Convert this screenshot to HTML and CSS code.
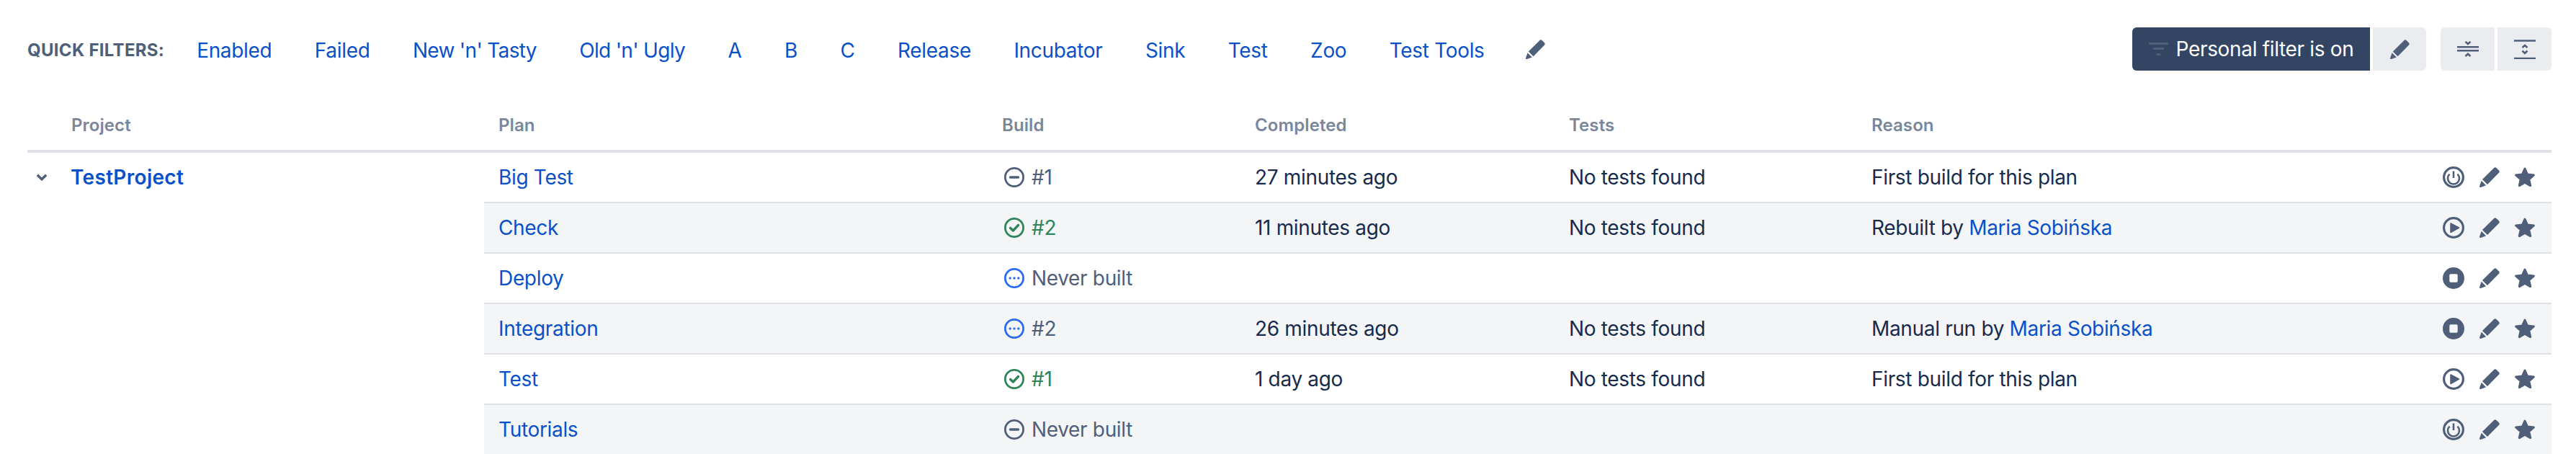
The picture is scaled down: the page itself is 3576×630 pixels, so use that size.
FILE: index.html
```html
<!DOCTYPE html>
<html lang="en">
<head>
<meta charset="utf-8">
<title>Plans</title>
<link rel="stylesheet" href="styles.css">
</head>
<body>
<svg class="sprites" xmlns="http://www.w3.org/2000/svg">
  <symbol id="pencil" viewBox="0 0 27 27">
    <path d="M19.2 1.2a2.6 2.6 0 0 1 3.6 0l3 3a2.6 2.6 0 0 1 0 3.6L10.600 23.200 3.800 16.400z"/>
    <path d="M2.600 18.200 8.800 24.400 1.600 26.900C.5 27.200-.2 26.500.1 25.400z"/>
  </symbol>
  <symbol id="star" viewBox="0 0 28 28">
    <path stroke="currentColor" stroke-width="3" stroke-linejoin="round" d="M14 2 17.600 10 26.400 10.900 19.800 16.800 21.700 25.600 14 21.100 6.300 25.600 8.200 16.800 1.600 10.900 10.400 10z"/>
  </symbol>
  <symbol id="power" viewBox="0 0 30 30">
    <circle cx="15" cy="15" r="13.400" fill="none" stroke="currentColor" stroke-width="3.200"/>
    <path fill="none" stroke="currentColor" stroke-width="2.600" d="M9.600 10.600a8 8 0 1 0 10.800 0M15 6.500v9.500"/>
  </symbol>
  <symbol id="play" viewBox="0 0 30 30">
    <circle cx="15" cy="15" r="13.400" fill="none" stroke="currentColor" stroke-width="3.200"/>
    <path stroke="currentColor" stroke-width="1.500" stroke-linejoin="round" d="M11 9 22.500 15 11 21.500z"/>
  </symbol>
  <symbol id="stop" viewBox="0 0 30 30">
    <path fill-rule="evenodd" d="M15 0a15 15 0 1 1 0 30 15 15 0 0 1 0-30zM11 9.300a1.700 1.700 0 0 0-1.700 1.700v8a1.700 1.700 0 0 0 1.700 1.700h8a1.700 1.700 0 0 0 1.700-1.700v-8a1.700 1.700 0 0 0-1.700-1.700z"/>
  </symbol>
  <symbol id="st-minus" viewBox="0 0 28 28">
    <circle cx="14" cy="14" r="12.600" fill="none" stroke="currentColor" stroke-width="2.800"/>
    <path stroke="currentColor" stroke-width="3.600" stroke-linecap="round" d="M8.600 14h10.800"/>
  </symbol>
  <symbol id="st-check" viewBox="0 0 28 28">
    <circle cx="14" cy="14" r="12.600" fill="none" stroke="currentColor" stroke-width="2.800"/>
    <path fill="none" stroke="currentColor" stroke-width="3.400" stroke-linecap="round" stroke-linejoin="round" d="M8.600 14.400 12.400 18 19.600 10.400"/>
  </symbol>
  <symbol id="st-dots" viewBox="0 0 28 28">
    <circle cx="14" cy="14" r="12.600" fill="none" stroke="currentColor" stroke-width="2.800"/>
    <circle cx="8.200" cy="14" r="1.700"/><circle cx="14" cy="14" r="1.700"/><circle cx="19.800" cy="14" r="1.700"/>
  </symbol>
</svg>

<header class="toolbar">
  <nav class="filters">
    <span class="filters-label">QUICK FILTERS:</span>
    <a class="link" href="#">Enabled</a>
    <a class="link" href="#">Failed</a>
    <a class="link tight" href="#">New 'n' Tasty</a>
    <a class="link tight" href="#">Old 'n' Ugly</a>
    <a class="link" href="#">A</a>
    <a class="link" href="#">B</a>
    <a class="link" href="#">C</a>
    <a class="link" href="#">Release</a>
    <a class="link" href="#">Incubator</a>
    <a class="link" href="#">Sink</a>
    <a class="link" href="#">Test</a>
    <a class="link" href="#">Zoo</a>
    <a class="link" href="#">Test Tools</a>
    <svg class="ico ico-pencil filters-edit"><use href="#pencil"/></svg>
  </nav>
  <div class="tools">
    <div class="btn-group">
      <button class="btn btn-dark">
        <svg class="funnel" viewBox="0 0 27 18"><path d="M0 0h27v3H0zM6 7h15v3H6zM10.500 15h6v3h-6z"/></svg>
        <span>Personal filter is on</span>
      </button>
      <button class="btn btn-light btn-edit"><svg class="ico ico-pencil"><use href="#pencil"/></svg></button>
    </div>
    <div class="btn-group">
      <button class="btn btn-light btn-fold btn-first">
        <svg class="fold" viewBox="0 0 30 22"><path d="M0 8.200h30M0 13.200h30" stroke-width="2.400"/><path d="M11.500.8 15 4l3.500-3.200M11.500 21 15 17.800l3.500 3.200" stroke-width="2.600"/></svg>
      </button>
      <button class="btn btn-light btn-fold btn-last">
        <svg class="fold unfold" viewBox="0 0 30 27"><path d="M0 1.500h30M0 26h30" stroke-width="2.400"/><path d="M11.500 11 15 8l3.500 3M11.500 15.500 15 19l3.500-3.500" stroke-width="2.600"/></svg>
      </button>
    </div>
  </div>
</header>

<table class="plans">
  <colgroup>
    <col class="c-project"><col class="c-plan"><col class="c-build"><col class="c-completed"><col class="c-tests"><col class="c-reason"><col class="c-actions">
  </colgroup>
  <thead>
    <tr>
      <th class="th-project">Project</th><th>Plan</th><th>Build</th><th>Completed</th><th>Tests</th><th>Reason</th><th></th>
    </tr>
  </thead>
  <tbody>
    <tr>
      <td class="project" rowspan="6">
        <div class="project-inner">
          <svg class="chevron" viewBox="0 0 16 10"><path d="M1.800 1.800 8 7.800l6.200-6"/></svg>
          <a class="link strong" href="#">TestProject</a>
        </div>
      </td>
      <td><a class="link" href="#">Big Test</a></td>
      <td><span class="build grey"><svg class="st"><use href="#st-minus"/></svg>#1</span></td>
      <td>27 minutes ago</td>
      <td>No tests found</td>
      <td>First build for this plan</td>
      <td><div class="actions"><svg class="act"><use href="#power"/></svg><svg class="ico ico-pencil"><use href="#pencil"/></svg><svg class="ico"><use href="#star"/></svg></div></td>
    </tr>
    <tr class="alt">
      <td><a class="link" href="#">Check</a></td>
      <td><span class="build green"><svg class="st"><use href="#st-check"/></svg>#2</span></td>
      <td>11 minutes ago</td>
      <td>No tests found</td>
      <td>Rebuilt by <a class="link" href="#">Maria Sobińska</a></td>
      <td><div class="actions"><svg class="act"><use href="#play"/></svg><svg class="ico ico-pencil"><use href="#pencil"/></svg><svg class="ico"><use href="#star"/></svg></div></td>
    </tr>
    <tr>
      <td><a class="link" href="#">Deploy</a></td>
      <td><span class="build grey"><svg class="st blue"><use href="#st-dots"/></svg>Never built</span></td>
      <td></td>
      <td></td>
      <td></td>
      <td><div class="actions"><svg class="act"><use href="#stop"/></svg><svg class="ico ico-pencil"><use href="#pencil"/></svg><svg class="ico"><use href="#star"/></svg></div></td>
    </tr>
    <tr class="alt">
      <td><a class="link" href="#">Integration</a></td>
      <td><span class="build grey"><svg class="st blue"><use href="#st-dots"/></svg>#2</span></td>
      <td>26 minutes ago</td>
      <td>No tests found</td>
      <td>Manual run by <a class="link" href="#">Maria Sobińska</a></td>
      <td><div class="actions"><svg class="act"><use href="#stop"/></svg><svg class="ico ico-pencil"><use href="#pencil"/></svg><svg class="ico"><use href="#star"/></svg></div></td>
    </tr>
    <tr>
      <td><a class="link" href="#">Test</a></td>
      <td><span class="build green"><svg class="st"><use href="#st-check"/></svg>#1</span></td>
      <td>1 day ago</td>
      <td>No tests found</td>
      <td>First build for this plan</td>
      <td><div class="actions"><svg class="act"><use href="#play"/></svg><svg class="ico ico-pencil"><use href="#pencil"/></svg><svg class="ico"><use href="#star"/></svg></div></td>
    </tr>
    <tr class="alt last">
      <td><a class="link" href="#">Tutorials</a></td>
      <td><span class="build grey"><svg class="st"><use href="#st-minus"/></svg>Never built</span></td>
      <td></td>
      <td></td>
      <td></td>
      <td><div class="actions"><svg class="act"><use href="#power"/></svg><svg class="ico ico-pencil"><use href="#pencil"/></svg><svg class="ico"><use href="#star"/></svg></div></td>
    </tr>
  </tbody>
</table>
</body>
</html>
```

FILE: styles.css
```css
* { box-sizing: border-box; }
html, body { margin: 0; padding: 0; background: #fff; }
html { overflow: hidden; }
body {
  width: 3576px;
  height: 630px;
  padding: 0 34px 0 38px;
  font-family: Inter, "Noto Sans", sans-serif;
  font-size: 28px;
  line-height: 40px;
  letter-spacing: -0.33px;
  color: #172b4d;
  overflow: hidden;
}
.sprites { display: none; }
.link { color: #0a50c8; text-decoration: none; }
.strong { font-weight: 600; letter-spacing: 0.3px; }
.tight { letter-spacing: -0.7px; }

.toolbar {
  display: flex;
  justify-content: space-between;
  align-items: center;
  height: 136px;
}
.filters { display: flex; align-items: center; gap: 59.5px; padding-top: 4px; }
.filters-label {
  font-size: 24px;
  font-weight: 700;
  letter-spacing: 0.3px;
  color: #505f79;
  margin-right: -14.5px;
}
.ico { width: 28px; height: 28px; color: #505f79; fill: #505f79; display: block; }
.ico-pencil { width: 27px; height: 27px; }
.filters-edit { margin-left: -2.5px; margin-top: -4px; }

.tools { display: flex; gap: 20px; }
.btn-group { display: flex; gap: 4px; }
.btn {
  display: flex;
  align-items: center;
  justify-content: center;
  height: 60px;
  border: 0;
  padding: 0;
  font: inherit;
  letter-spacing: inherit;
}
.btn-dark {
  width: 330px;
  background: #344563;
  color: #fff;
  border-radius: 6px 0 0 6px;
  gap: 11px;
}
.btn-light { background: #ebecf0; }
.btn-edit { width: 74px; border-radius: 0 6px 6px 0; }
.btn-fold { width: 75px; }
.btn-first { border-radius: 6px 0 0 6px; }
.btn-last { border-radius: 0 6px 6px 0; }
.funnel { width: 27px; height: 18px; fill: #505f79; display: block; }
.fold { width: 30px; height: 22px; fill: none; stroke: #505f79; display: block; }
.unfold { height: 27px; }

.plans {
  width: 3504px;
  table-layout: fixed;
  border-collapse: separate;
  border-spacing: 0;
}
.c-project { width: 634px; }
.c-plan { width: 699px; }
.c-build { width: 351px; }
.c-completed { width: 436px; }
.c-tests { width: 420px; }
.c-reason { width: 782px; }
.c-actions { width: 182px; }

th {
  height: 76px;
  padding: 4px 0 0 20px;
  text-align: left;
  font-size: 24px;
  font-weight: 600;
  letter-spacing: 0.1px;
  color: #7a869a;
  border-bottom: 4px solid #dfe1e6;
  vertical-align: middle;
}
.th-project { padding-left: 61px; }
td {
  height: 70px;
  padding: 0 0 0 20px;
  border-bottom: 2px solid #dfe1e6;
  vertical-align: middle;
  white-space: nowrap;
}
.alt td { background: #f4f5f7; }
.last td { border-bottom: 0; height: 68px; }

td.project {
  vertical-align: top;
  padding: 0;
  border-bottom: 0;
  background: #fff;
}
.project-inner {
  display: flex;
  align-items: center;
  height: 68px;
  padding-left: 12px;
  gap: 32px;
}
.chevron { width: 16px; height: 10px; fill: none; stroke: #505f79; stroke-width: 3.4; display: block; flex: none; }

.build { display: flex; align-items: center; gap: 10px; padding-left: 3px; }
.grey { color: #505f79; }
.green { color: #2f8558; }
.st { width: 28px; height: 28px; display: block; fill: currentColor; flex: none; }
.st.blue { color: #2a6df4; }

.actions {
  display: flex;
  align-items: center;
  justify-content: flex-end;
  padding-right: 23px;
  gap: 21px;
}
.act { width: 30px; height: 30px; color: #505f79; fill: #505f79; display: block; }
.actions .ico-pencil { width: 28px; height: 28px; }
```
